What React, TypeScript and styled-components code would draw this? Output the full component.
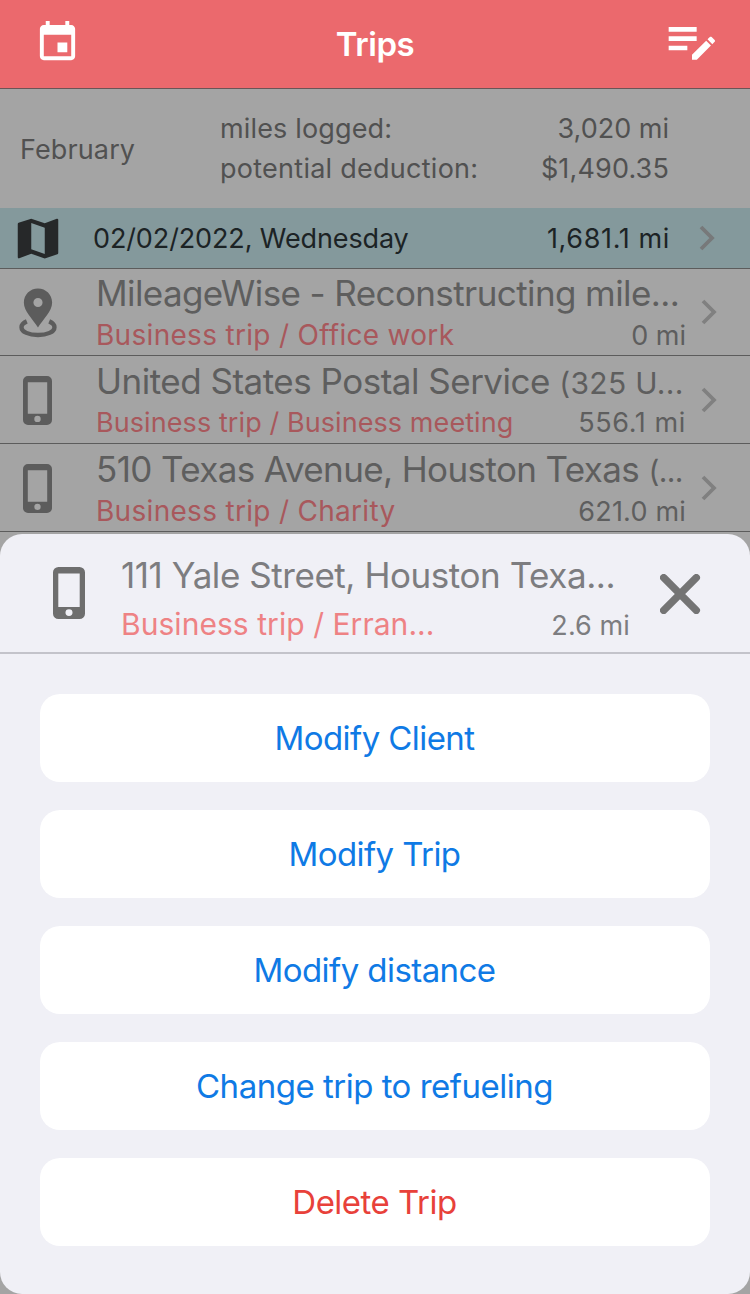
import React from "react";
import styled, { createGlobalStyle } from "styled-components";

const GlobalStyle = createGlobalStyle`
  * { box-sizing: border-box; }
  body { margin: 0; background: #a4a4a4; font-family: Inter, "Liberation Sans", sans-serif; }
  button { font: inherit; border: 0; padding: 0; background: none; }
`;

const Screen = styled.div`
  position: relative;
  width: 750px;
  height: 1294px;
  overflow: hidden;
  background: #a4a4a4;
`;

const TopBar = styled.header`
  display: flex;
  align-items: center;
  justify-content: space-between;
  height: 89px;
  padding: 0 29px;
  background: #eb696d;
  border-bottom: 1px solid #6a5556;
  color: #fff;
`;

const BarButton = styled.button<{ $lift: number }>`
  display: flex;
  justify-content: center;
  width: 57px;
  color: #fff;
  margin-bottom: ${(p) => p.$lift}px;
`;

const Text = styled.span<{ $size: number; $track?: number; $color?: string; $weight?: number }>`
  font-size: ${(p) => p.$size}px;
  letter-spacing: ${(p) => p.$track ?? 0}px;
  color: ${(p) => p.$color ?? "inherit"};
  font-weight: ${(p) => p.$weight ?? 400};
  line-height: 40px;
  white-space: pre;
`;

const Summary = styled.section`
  display: flex;
  align-items: center;
  height: 119px;
  padding: 0 81px 0 20px;
  color: #515151;
`;

const Month = styled.div`
  display: flex;
  width: 200px;
  padding-top: 2px;
`;

const Totals = styled.div`
  flex: 1;
`;

const TotalLine = styled.div`
  display: flex;
  justify-content: space-between;
  height: 40px;
`;

const DateRow = styled.div`
  display: flex;
  align-items: center;
  height: 61px;
  padding: 0 35px 0 11px;
  background: #84999c;
  border-bottom: 1px solid #5c5c5c;
  color: #1c2325;
`;

const DateLabel = styled.div`
  display: flex;
  flex: 1;
  justify-content: space-between;
  padding: 2px 0 0 28px;
`;

const DateChevron = styled.div`
  display: flex;
  margin-left: 29px;
`;

const TripRow = styled.div<{ $height: number }>`
  display: flex;
  align-items: center;
  height: ${(p) => p.$height}px;
  padding: 0 33px 0 18px;
  border-bottom: 1px solid #5c5c5c;
  color: #5e5e5e;
`;

const TripIcon = styled.div`
  display: flex;
  justify-content: center;
  width: 39px;
  padding-top: 1px;
  color: #5c5c5c;
`;

const TripBody = styled.div`
  width: 590px;
  margin-left: 39px;
  padding-top: 4px;
`;

const TripTitle = styled.div`
  display: flex;
  align-items: baseline;
  height: 42px;
`;

const TripMeta = styled.div`
  display: flex;
  align-items: baseline;
  justify-content: space-between;
  height: 40px;
`;

const RowChevron = styled.div`
  display: flex;
  margin-left: 15px;
`;

const Sheet = styled.section`
  position: absolute;
  left: 0;
  bottom: 0;
  width: 100%;
  height: 760px;
  border-radius: 22px;
  background: #f0f0f6;
`;

const SheetHeader = styled.div`
  display: flex;
  align-items: center;
  height: 120px;
  padding: 0 49px 0 53px;
  border-bottom: 2px solid #c3c3ca;
  color: #6e6e6e;
`;

const SheetBody = styled.div`
  width: 509px;
  margin-left: 36px;
  padding-top: 13px;
  color: #7d7d80;
`;

const SheetMeta = styled(TripMeta)`
  margin-top: 7px;
`;

const CloseButton = styled.button`
  display: flex;
  margin-left: 30px;
  padding-top: 2px;
`;

const Actions = styled.div`
  display: flex;
  flex-direction: column;
  gap: 28px;
  padding: 40px;
`;

const ActionButton = styled.button<{ $danger?: boolean }>`
  display: flex;
  align-items: center;
  justify-content: center;
  height: 88px;
  padding-right: 1px;
  border-radius: 20px;
  background: #fff;
  color: ${(p) => (p.$danger ? "#e8413a" : "#0f7ae5")};
`;

const CalendarIcon = () => (
  <svg width="47" height="47" viewBox="0 0 24 24" fill="currentColor">
    <path d="M17 12h-5v5h5v-5zM16 1v2H8V1H6v2H5c-1.11 0-1.99.9-1.99 2L3 19c0 1.1.89 2 2 2h14c1.1 0 2-.9 2-2V5c0-1.1-.9-2-2-2h-1V1h-2zm3 18H5V8h14v11z" />
  </svg>
);

const EditListIcon = () => (
  <svg width="56" height="56" viewBox="0 0 24 24" fill="currentColor">
    <path d="M2 6v2h12V6H2m0 4v2h12v-2H2m18.040.130c-.14 0-.28.06-.39.17l-1 1 2.050 2.050 1-1c.22-.21.22-.56 0-.77l-1.280-1.280c-.11-.11-.24-.17-.38-.17m-1.970 1.750L12 17.940V20h2.060l6.060-6.070-2.050-2.050M2 14v2h8v-2H2z" />
  </svg>
);

const MapIcon = () => (
  <svg width="54" height="53" viewBox="0 0 24 24" fill="#262829" preserveAspectRatio="none">
    <path d="M15 19l-6-2.11V5l6 2.11M20.5 3h-.16L15 5.1 9 3 3.36 4.9c-.21.07-.36.25-.36.48V20.5a.5.5 0 0 0 .5.5l.16-.03L9 18.9l6 2.1 5.64-1.9c.21-.1.36-.25.36-.48V3.5a.5.5 0 0 0-.5-.5z" />
  </svg>
);

const PinIcon = () => (
  <svg width="40" height="51" viewBox="0 0 40 51">
    <path
      d="M20.500 1C12.300 1 6 7.400 6 15.400c0 8.500 9 16.500 14.500 25.400 5.500-8.900 14.500-16.900 14.500-25.400C35 7.400 28.700 1 20.500 1zm0 9.500a4.700 4.700 0 1 1 0 9.400 4.700 4.700 0 0 1 0-9.400z"
      fill="currentColor"
      fillRule="evenodd"
    />
    <path
      d="M9 34.600C5.400 36.200 3.600 38.400 3.600 40.600c0 4.800 7.600 8 16.900 8s16.900-3.200 16.900-8c0-2.200-1.800-4.400-5.400-6"
      fill="none"
      stroke="currentColor"
      strokeWidth="4.500"
    />
  </svg>
);

const PhoneIcon = ({ width, height }: { width: number; height: number }) => (
  <svg width={width} height={height} viewBox="0 0 29 49" preserveAspectRatio="none">
    <path
      d="M5 0h19a5 5 0 0 1 5 5v39a5 5 0 0 1-5 5H5a5 5 0 0 1-5-5V5a5 5 0 0 1 5-5zM4.800 6.200v31.500h19.400V6.200zM14.500 39.700a3.200 3.200 0 1 0 0 6.400 3.200 3.200 0 0 0 0-6.400z"
      fill="currentColor"
      fillRule="evenodd"
    />
  </svg>
);

const Chevron = ({ color }: { color: string }) => (
  <svg width="16" height="26" viewBox="0 0 16 26" fill="none" stroke={color} strokeWidth="3.800">
    <path d="M2 2l11 11L2 24" />
  </svg>
);

const CloseIcon = () => (
  <svg width="41" height="40" viewBox="0 0 41 40" stroke="#747474" strokeWidth="7.400" strokeLinecap="round">
    <path d="M3.700 3.700l32.600 32.600M36.300 3.700L3.700 36.300" />
  </svg>
);

interface Trip {
  icon: "pin" | "phone";
  title: string;
  titleTrack: number;
  address?: string;
  addressTrack?: number;
  purpose: string;
  purposeSize: number;
  purposeTrack: number;
  distance: string;
  distanceTrack: number;
  height: number;
}

const trips: Trip[] = [
  { icon: "pin", title: "MileageWise - Reconstructing mile...", titleTrack: -0.6, purpose: "Business trip / Office work", purposeSize: 28, purposeTrack: 0.3, distance: "0 mi", distanceTrack: 0, height: 87 },
  { icon: "phone", title: "United States Postal Service ", titleTrack: -0.5, address: "(325 U...", addressTrack: 0.3, purpose: "Business trip / Business meeting", purposeSize: 27, purposeTrack: 0.08, distance: "556.1 mi", distanceTrack: 0.6, height: 88 },
  { icon: "phone", title: "510 Texas Avenue, Houston Texas ", titleTrack: -0.62, address: "(...", addressTrack: -0.6, purpose: "Business trip / Charity", purposeSize: 28, purposeTrack: 0.3, distance: "621.0 mi", distanceTrack: 0.2, height: 88 },
];

const actions = [
  { label: "Modify Client", track: -0.57 },
  { label: "Modify Trip", track: -0.6 },
  { label: "Modify distance", track: -0.57 },
  { label: "Change trip to refueling", track: -0.5 },
  { label: "Delete Trip", track: -0.5, danger: true },
];

export default function App() {
  return (
    <Screen>
      <GlobalStyle />
      <TopBar>
        <BarButton $lift={3}><CalendarIcon /></BarButton>
        <Text $size={33} $weight={600} $track={-0.45}>Trips</Text>
        <BarButton $lift={6}><EditListIcon /></BarButton>
      </TopBar>
      <Summary>
        <Month><Text $size={27} $track={0.12}>February</Text></Month>
        <Totals>
          <TotalLine>
            <Text $size={27} $track={0.15}>miles logged:</Text>
            <Text $size={27}>3,020 mi</Text>
          </TotalLine>
          <TotalLine>
            <Text $size={27} $track={0.26}>potential deduction:</Text>
            <Text $size={27} $track={0.15}>$1,490.35</Text>
          </TotalLine>
        </Totals>
      </Summary>
      <DateRow>
        <MapIcon />
        <DateLabel>
          <Text $size={27} $track={-0.12}>02/02/2022, Wednesday</Text>
          <Text $size={27} $track={0.63}>1,681.1 mi</Text>
        </DateLabel>
        <DateChevron><Chevron color="#77797a" /></DateChevron>
      </DateRow>
      {trips.map((t) => (
        <TripRow key={t.title} $height={t.height}>
          <TripIcon>{t.icon === "pin" ? <PinIcon /> : <PhoneIcon width={29} height={49} />}</TripIcon>
          <TripBody>
            <TripTitle>
              <Text $size={35} $track={t.titleTrack}>{t.title}</Text>
              {t.address && <Text $size={30} $track={t.addressTrack}>{t.address}</Text>}
            </TripTitle>
            <TripMeta>
              <Text $size={t.purposeSize} $track={t.purposeTrack} $color="#a8585c">{t.purpose}</Text>
              <Text $size={27} $track={t.distanceTrack}>{t.distance}</Text>
            </TripMeta>
          </TripBody>
          <RowChevron><Chevron color="#808080" /></RowChevron>
        </TripRow>
      ))}
      <Sheet>
        <SheetHeader>
          <PhoneIcon width={32} height={52} />
          <SheetBody>
            <TripTitle><Text $size={35} $track={-0.44}>111 Yale Street, Houston Texa...</Text></TripTitle>
            <SheetMeta>
              <Text $size={30} $track={0.05} $color="#ee8284">Business trip / Erran...</Text>
              <Text $size={27} $track={0.1}>2.6 mi</Text>
            </SheetMeta>
          </SheetBody>
          <CloseButton><CloseIcon /></CloseButton>
        </SheetHeader>
        <Actions>
          {actions.map((a) => (
            <ActionButton key={a.label} $danger={a.danger}>
              <Text $size={33} $track={a.track}>{a.label}</Text>
            </ActionButton>
          ))}
        </Actions>
      </Sheet>
    </Screen>
  );
}
